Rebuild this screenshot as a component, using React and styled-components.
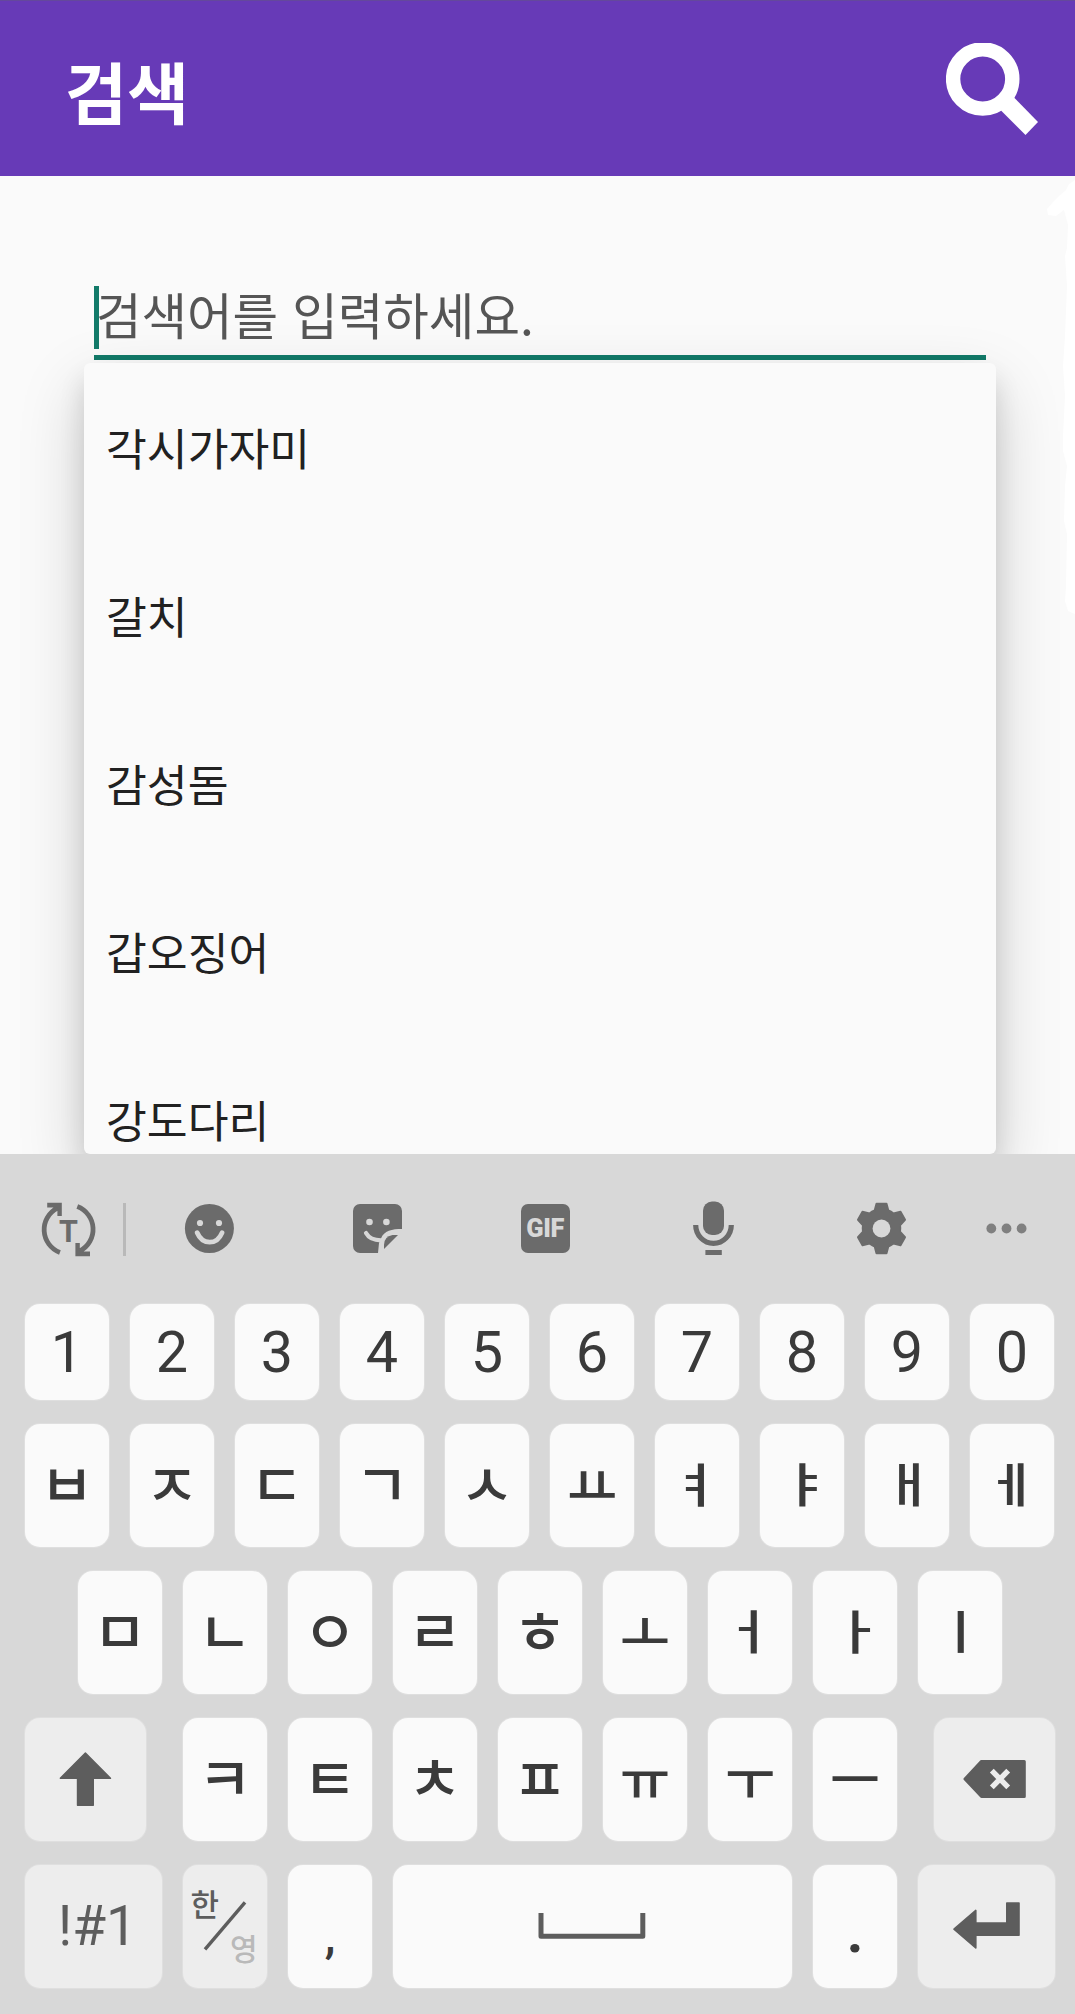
import React from "react";
import styled, { createGlobalStyle } from "styled-components";

const GlobalStyle = createGlobalStyle`
  html, body { margin: 0; padding: 0; background: #fafafa; }
  * { box-sizing: border-box; }
`;

const korean = `"Noto Sans CJK KR", "Noto Sans", sans-serif`;
const latin = `Roboto, "Noto Sans CJK KR", sans-serif`;
const panel = "#d8d8d8";
const iconGray = "#6b6b6b";
const keyGray = "#5d5d5d";

const Screen = styled.div`
  width: 1075px;
  height: 2014px;
  display: flex;
  flex-direction: column;
  overflow: hidden;
  background: #fafafa;
  font-family: ${korean};
`;

const Header = styled.header`
  height: 176px;
  flex: none;
  display: flex;
  justify-content: space-between;
  align-items: center;
  padding: 0 37px 0 65px;
  background: #673ab7;
  border-top: 1px solid #64489c;
`;

const Title = styled.h1`
  margin: 0;
  padding-top: 3px;
  font-size: 67.5px;
  line-height: 80px;
  font-weight: 700;
  color: #fff;
`;

const SearchIcon = styled.svg`
  width: 92px;
  height: 92px;
  flex: none;
`;

const Content = styled.main`
  position: relative;
  height: 978px;
  flex: none;
  overflow: hidden;
  padding: 110px 79px 0 84px;
`;

const EdgeMark = styled.svg`
  position: absolute;
  right: 0;
  top: 0;
  width: 40px;
  height: 450px;
`;

const Field = styled.div`
  height: 74px;
  margin: 0 10px;
  display: flex;
  align-items: flex-start;
  border-bottom: 5px solid #127a69;
`;

const Caret = styled.span`
  width: 5px;
  height: 63px;
  flex: none;
  background: #127a69;
`;

const Placeholder = styled.span`
  margin-left: -3px;
  font-size: 49.5px;
  line-height: 56px;
  word-spacing: 3px;
  color: #555;
  white-space: pre;
`;

const Dropdown = styled.ul`
  list-style: none;
  width: 912px;
  height: 791px;
  margin: 3px 0 0;
  padding: 0;
  overflow: hidden;
  border-radius: 6px;
  background: #fafafa;
  box-shadow: 0 26px 66px rgba(0, 0, 0, 0.18), 0 16px 26px rgba(0, 0, 0, 0.12);
`;

const Option = styled.li`
  height: 168px;
  padding-left: 22px;
  display: flex;
  align-items: center;
  font-size: 44.4px;
  line-height: 60px;
  color: #212121;
`;

const Keyboard = styled.section`
  flex: none;
  height: 860px;
  background: ${panel};
`;

const Toolbar = styled.div`
  height: 150px;
  padding-left: 13px;
  display: grid;
  grid-template-columns: 110px 3px repeat(5, 168px) 82px;
  align-items: center;
  justify-items: center;
`;

const Divider = styled.span`
  width: 3px;
  height: 53px;
  background: #b9b9b9;
`;

const ToolSvg = styled.svg`
  width: 60px;
  height: 60px;
  display: block;
  fill: ${iconGray};
`;

const Rows = styled.div`
  display: flex;
  flex-direction: column;
  gap: 24px;
`;

const Row = styled.div`
  height: ${(p) => p.$h || 123}px;
  padding: 0 20px 0 ${(p) => p.$left || 25}px;
  display: flex;
  gap: 21px;
`;

const Key = styled.div`
  width: ${(p) => p.$w || 84}px;
  height: 100%;
  flex: none;
  display: flex;
  align-items: center;
  justify-content: center;
  margin-left: ${(p) => p.$ml || 0}px;
  margin-right: ${(p) => p.$mr || 0}px;
  padding: ${(p) => p.$pad || "0"};
  border-radius: 15px;
  background: ${(p) => (p.$soft ? "#ededed" : "#fafafa")};
  box-shadow: 0 0 0 1px rgba(255, 255, 255, 0.18);
  font-family: ${latin};
  font-size: ${(p) => p.$size || 57.5}px;
  line-height: 1;
  color: ${(p) => (p.$soft ? keyGray : "#3a3a3a")};
`;

const Jamo = styled.span`
  font-family: ${korean};
  font-size: ${(p) => p.$size}px;
  line-height: 60px;
  font-weight: 500;
  transform: translate(${(p) => p.$x}px, ${(p) => p.$y}px) scaleX(${(p) => p.$stretch});
`;

const KeySvg = styled.svg`
  width: 100%;
  height: 100%;
  display: block;
  font-family: ${korean};
`;

const Punct = styled.span`
  padding-top: ${(p) => p.$top || 0}px;
  font-size: ${(p) => p.$size}px;
  font-weight: ${(p) => p.$weight};
`;

const fish = ["각시가자미", "갈치", "감성돔", "갑오징어", "강도다리"];
const numbers = "1234567890".split("");
const rowOne = "ㅂㅈㄷㄱㅅㅛㅕㅑㅐㅔ".split("");
const rowTwo = "ㅁㄴㅇㄹㅎㅗㅓㅏㅣ".split("");
const rowThree = "ㅋㅌㅊㅍㅠㅜㅡ".split("");

/* Consonants are drawn larger than vowels; upright vowels are widened. */
const uprightShift = { ㅕ: -2, ㅑ: 3, ㅐ: 1, ㅔ: -1, ㅓ: -2, ㅏ: 1.5, ㅣ: 0 };

function jamoStyle(c) {
  if (c in uprightShift) return { $size: 46.5, $x: uprightShift[c], $y: -4.5, $stretch: 1.25 };
  if ("ㅛㅗㅠㅜㅡ".includes(c)) return { $size: 54.5, $x: 0, $y: -3.5, $stretch: 1 };
  return { $size: 59, $x: 0, $y: -4, $stretch: 1 };
}

const cycle = (
  <>
    <path d="M9.2 3.7H23.8V17H19.4V12L15 8.4H9.2Z" />
    <path d="M19.2 9.2A24.3 24.3 0 0 0 21.9 53.5" fill="none" stroke={iconGray} strokeWidth="4.8" />
  </>
);

function Tools() {
  return (
    <Toolbar>
      <ToolSvg viewBox="0 0 60 60">
        {cycle}
        <g transform="rotate(180 30.6 30.5)">{cycle}</g>
        <text x="30.5" y="42.7" textAnchor="middle" fontFamily="Roboto" fontWeight="700" fontSize="30.5">T</text>
      </ToolSvg>
      <Divider />
      <ToolSvg viewBox="0 0 60 60">
        <circle cx="29.4" cy="29.5" r="24.5" />
        <circle cx="20" cy="24" r="3.1" fill={panel} />
        <circle cx="39" cy="24" r="3.1" fill={panel} />
        <path d="M17.2 33.8C22.5 46.3 36.8 46.3 42 33.8" fill="none" stroke={panel} strokeWidth="4.8" strokeLinecap="round" />
      </ToolSvg>
      <ToolSvg viewBox="0 0 60 60">
        <path d="M12 5H47A7 7 0 0 1 54 12V30C44 30 36 31.5 33 39.5L31 44L30 54H12A7 7 0 0 1 5 47V12A7 7 0 0 1 12 5Z" />
        <path d="M50 36H44.5Q36 37.5 36 46V50Z" />
        <circle cx="21.5" cy="23" r="3.3" fill={panel} />
        <circle cx="38.4" cy="23" r="3.3" fill={panel} />
        <path d="M18 34Q22 41.3 33 41.3" fill="none" stroke={panel} strokeWidth="4.2" strokeLinecap="round" />
      </ToolSvg>
      <ToolSvg viewBox="0 0 60 60">
        <rect x="5" y="5" width="49" height="49" rx="7" />
        <text x="29.3" y="38.4" textAnchor="middle" fontFamily="Roboto" fontWeight="900" fontSize="25.4" fill={panel} textLength="38">GIF</text>
      </ToolSvg>
      <ToolSvg viewBox="0 0 60 60">
        <rect x="19" y="2.5" width="21" height="33.5" rx="9" />
        <path d="M11.7 26A17.8 18.4 0 0 0 47.3 26" fill="none" stroke={iconGray} strokeWidth="5.2" />
        <rect x="21.4" y="51" width="16.4" height="5" />
      </ToolSvg>
      <ToolSvg viewBox="0 0 60 60">
        <path
          d="M24.5 4.7H34.5L36.3 11.5Q39 12.6 41.5 14.5L48.5 12.8L53 20.8L48 26.3Q48.6 29.5 48 32.7L53 38.2L48.5 46.2L41.5 44.5Q39 46.4 36.3 47.5L34.5 54.3H24.5L22.7 47.5Q20 46.4 17.5 44.5L10.5 46.2L6 38.2L11 32.7Q10.4 29.5 11 26.3L6 20.8L10.5 12.8L17.5 14.5Q20 12.6 22.7 11.5Z"
          stroke={iconGray}
          strokeWidth="2"
          strokeLinejoin="round"
        />
        <circle cx="29.5" cy="29.5" r="8.9" fill={panel} />
      </ToolSvg>
      <ToolSvg viewBox="0 0 60 60">
        <g fill="#808080">
          <circle cx="14.3" cy="29.5" r="4.9" />
          <circle cx="29.5" cy="29.5" r="4.9" />
          <circle cx="44.6" cy="29.5" r="4.9" />
        </g>
      </ToolSvg>
    </Toolbar>
  );
}

const jamoKeys = (chars) => chars.map((c) => <Key key={c}><Jamo {...jamoStyle(c)}>{c}</Jamo></Key>);

export default function App() {
  return (
    <Screen>
      <GlobalStyle />
      <Header>
        <Title>검색</Title>
        <SearchIcon viewBox="0 0 92 92">
          <circle cx="36.7" cy="36" r="29.6" fill="none" stroke="#fff" strokeWidth="14.4" />
          <path d="M68 54.5L92 79L79.5 92L55 67.5Z" fill="#fff" />
        </SearchIcon>
      </Header>
      <Content>
        <EdgeMark viewBox="0 0 40 450">
          <path
            d="M40 4L34 8L31 14L25 19L18 26L12 33L13 39L21 40L29 34L33 49L32 72L30 80L32 110L30 160L28 190L30 220L28 260L28 275L32 290L30 310L29 345L32 358L31 410L30 425L33 435L40 438Z"
            fill="#fff"
          />
        </EdgeMark>
        <Field>
          <Caret />
          <Placeholder>검색어를 입력하세요.</Placeholder>
        </Field>
        <Dropdown>
          {fish.map((name) => <Option key={name}>{name}</Option>)}
        </Dropdown>
      </Content>
      <Keyboard>
        <Tools />
        <Rows>
          <Row $h={96}>{numbers.map((n) => <Key key={n} $pad="2px 0 0">{n}</Key>)}</Row>
          <Row>{jamoKeys(rowOne)}</Row>
          <Row $left={78}>{jamoKeys(rowTwo)}</Row>
          <Row>
            <Key $soft $w={121} $mr={16}>
              <KeySvg viewBox="0 0 121 123" fill={keyGray}>
                <path d="M60.4 35L85.5 60.2H68.3V87.3H52.5V60.2H35.3Z" stroke={keyGray} strokeWidth="1.4" strokeLinejoin="round" />
              </KeySvg>
            </Key>
            {jamoKeys(rowThree)}
            <Key $soft $w={121} $ml={16}>
              <KeySvg viewBox="0 0 121 123" fill={keyGray}>
                <path d="M31 61L47.5 43.4H90.3V78.4H47.5Z" stroke={keyGray} strokeWidth="3" strokeLinejoin="round" />
                <path d="M57.8 52.7L74.2 69.3M74.2 52.7L57.8 69.3" stroke="#ededed" strokeWidth="5.4" />
              </KeySvg>
            </Key>
          </Row>
          <Row>
            <Key $soft $w={137} $size={55} $pad="0 0 0 8px">!#1</Key>
            <Key $soft>
              <KeySvg viewBox="0 0 84 123">
                <text x="7.5" y="51" fontSize="31" fontWeight="500" fill={keyGray}>한</text>
                <path d="M22 84.3L62 37.3" stroke={keyGray} strokeWidth="3.4" />
                <text x="47" y="94.5" fontSize="30" fontWeight="500" fill="#b9b9b9">영</text>
              </KeySvg>
            </Key>
            <Key><Punct $top={18} $size={48} $weight={500}>,</Punct></Key>
            <Key $w={399}>
              <KeySvg viewBox="0 0 399 123" fill="none">
                <path d="M148 48V71.2H249.8V48" stroke={keyGray} strokeWidth="5" strokeLinejoin="round" />
              </KeySvg>
            </Key>
            <Key><Punct $top={12} $size={57.5} $weight={700}>.</Punct></Key>
            <Key $soft $w={137}>
              <KeySvg viewBox="0 0 137 123" fill={keyGray}>
                <path d="M36 64.2L57.8 45.4V58H88.8V38H101V70.3H57.8V83Z" stroke={keyGray} strokeWidth="1.6" strokeLinejoin="round" />
              </KeySvg>
            </Key>
          </Row>
        </Rows>
      </Keyboard>
    </Screen>
  );
}
